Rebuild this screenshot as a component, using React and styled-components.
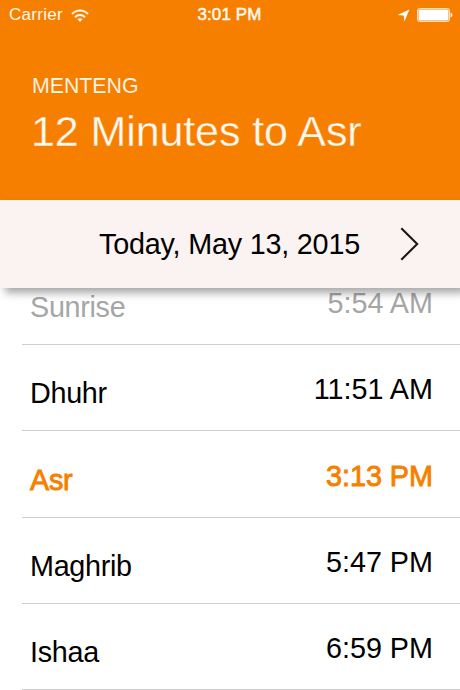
import React from 'react';
import styled, {createGlobalStyle} from "styled-components";

const orange = '#f77f00';

const prayers = [
    {name: 'Sunrise', time: '5:54 AM', passed: true},
    {name: 'Dhuhr', time: '11:51 AM'},
    {name: 'Asr', time: '3:13 PM', next: true},
    {name: 'Maghrib', time: '5:47 PM'},
    {name: 'Ishaa', time: '6:59 PM'},
];

function StatusBar() {
    return (
        <StatusContainer>
            <Carrier>
                <span>Carrier</span>
                <svg width="18" height="13" viewBox="0 0 18 13" fill="none" stroke="#fff8e8" strokeWidth="2">
                    <path d="M1 5C5.4.3 12.6.3 17 5"/>
                    <path d="M4 8.2c2.9-2.9 7.1-2.9 10 0"/>
                    <path d="M6.4 10.3c1.5-1.4 3.7-1.4 5.2 0L9 12.9z" fill="#fff8e8" stroke="none"/>
                </svg>
            </Carrier>
            <Clock>3:01 PM</Clock>
            <StatusIcons>
                <svg width="13" height="13" viewBox="0 0 13 13" fill="#fff">
                    <path d="M12.4.5L7.4 12.6 6.8 6.6.5 6z"/>
                </svg>
                <svg width="36" height="14" viewBox="0 0 36 14" fill="#fff">
                    <rect x=".5" y=".5" width="32" height="13" rx="2" fill="none" stroke="#ffe3bb"/>
                    <rect x="1.5" y="1.5" width="30" height="11" rx=".8"/>
                    <path d="M33.6 4.6c2.4.7 2.4 4.1 0 4.8z"/>
                </svg>
            </StatusIcons>
        </StatusContainer>
    )
}

function App() {
    return (
        <>
            <GlobalStyle/>
            <Container>
                <Header>
                    <StatusBar/>
                    <Location>MENTENG</Location>
                    <Countdown>12 Minutes to Asr</Countdown>
                </Header>
                <DateBar>
                    <DateText>Today, May 13, 2015</DateText>
                    <NextButton aria-label="Next day">
                        <svg width="20" height="34" viewBox="0 0 20 34" fill="none" stroke="#1c1616" strokeWidth="2.1">
                            <path d="M1.3 1.3L17.2 17 1.3 32.7"/>
                        </svg>
                    </NextButton>
                </DateBar>
                <PrayerList>
                    {prayers.map(({name, time, passed, next}) => (
                        <PrayerRow key={name} $passed={passed} $next={next}>
                            <PrayerName>{name}</PrayerName>
                            <PrayerTime>{time}</PrayerTime>
                        </PrayerRow>
                    ))}
                </PrayerList>
            </Container>
        </>
    )
}

const GlobalStyle = createGlobalStyle`
  * {
    box-sizing: border-box;
  }
  body {
    margin: 0;
    font-family: "Liberation Sans", Arial, sans-serif;
    background: #fff;
  }
  h1, h2, p, ul {
    margin: 0;
    padding: 0;
    font-weight: 400;
  }
  svg {
    display: block;
  }
`;

const Container = styled.div`
  display: flex;
  flex-direction: column;
  width: 460px;
  height: 690px;
  overflow: hidden;
  background: #fff;
`;

const Header = styled.header`
  flex: none;
  height: 200px;
  color: #fffaf0;
  background: ${orange};
`;

const StatusContainer = styled.div`
  display: grid;
  grid-template-columns: 1fr auto 1fr;
  align-items: center;
  height: 30px;
  padding: 0 7px 0 8px;
  font-size: 17px;
  line-height: 30px;
`;

const Carrier = styled.div`
  display: flex;
  align-items: center;
  gap: 8px;
  padding-left: 1px;
  letter-spacing: 0.3px;
`;

const Clock = styled.div`
  margin-left: -2px;
  font-size: 17px;
  letter-spacing: 0.1px;
  -webkit-text-stroke: 0.5px #fffaf0;
`;

const StatusIcons = styled.div`
  display: flex;
  align-items: center;
  justify-content: flex-end;
  gap: 7px;
`;

const Location = styled.p`
  margin: 43px 0 0 32px;
  font-size: 21.3px;
  line-height: 26px;
  -webkit-text-stroke: 0.15px ${orange};
`;

const Countdown = styled.h1`
  margin: 7px 0 0 31px;
  font-size: 43px;
  line-height: 50px;
  letter-spacing: -0.1px;
  white-space: nowrap;
  -webkit-text-stroke: 0.35px ${orange};
`;

const DateBar = styled.div`
  position: relative;
  z-index: 1;
  display: flex;
  flex: none;
  align-items: center;
  justify-content: space-between;
  height: 88px;
  padding: 0 40px 0 99px;
  background: #fbf3f2;
  box-shadow: 5px 5px 8px rgba(0, 0, 0, 0.35);
`;

const DateText = styled.h2`
  font-size: 28.75px;
  line-height: 32px;
  letter-spacing: -0.2px;
  white-space: nowrap;
`;

const NextButton = styled.button`
  padding: 0;
  border: 0;
  background: none;
  cursor: pointer;
`;

const PrayerList = styled.ul`
  flex: none;
  list-style: none;
`;

const PrayerRow = styled.li`
  display: flex;
  align-items: flex-end;
  justify-content: space-between;
  height: 86.25px;
  margin-left: 22px;
  padding: 0 27px 24px 8px;
  border-bottom: 1px solid #cfcfcf;
  font-size: 28.75px;
  line-height: 32px;
  color: ${({$passed, $next}) => $next ? orange : $passed ? '#a6a6a6' : '#000'};
  -webkit-text-stroke: ${({$next}) => $next ? '0.9px' : '0'};

  /* the first row is scrolled halfway under the date bar */
  &:first-child {
    height: 57px;
  }
`;

const PrayerName = styled.span`
  margin-bottom: -3px;
  letter-spacing: -0.3px;
`;

const PrayerTime = styled.span`
  margin-bottom: 1px;
  white-space: nowrap;
`;

export default App;
